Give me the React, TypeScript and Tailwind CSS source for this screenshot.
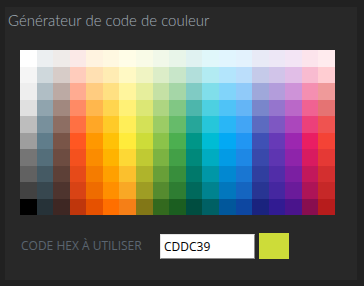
import React from "react";

// material palette, one column per hue, rows 50 -> 900
const columns: string[][] = [
  ["bg-[#ffffff]", "bg-[#f5f5f5]", "bg-[#eeeeee]", "bg-[#e0e0e0]", "bg-[#bdbdbd]", "bg-[#9e9e9e]", "bg-[#757575]", "bg-[#616161]", "bg-[#424242]", "bg-[#000000]"],
  ["bg-[#eceff1]", "bg-[#cfd8dc]", "bg-[#b0bec5]", "bg-[#90a4ae]", "bg-[#78909c]", "bg-[#607d8b]", "bg-[#546e7a]", "bg-[#455a64]", "bg-[#37474f]", "bg-[#263238]"],
  ["bg-[#efebe9]", "bg-[#d7ccc8]", "bg-[#bcaaa4]", "bg-[#a1887f]", "bg-[#8d6e63]", "bg-[#795548]", "bg-[#6d4c41]", "bg-[#5d4037]", "bg-[#4e342e]", "bg-[#3e2723]"],
  ["bg-[#fbe9e7]", "bg-[#ffccbc]", "bg-[#ffab91]", "bg-[#ff8a65]", "bg-[#ff7043]", "bg-[#ff5722]", "bg-[#f4511e]", "bg-[#e64a19]", "bg-[#d84315]", "bg-[#bf360c]"],
  ["bg-[#fff3e0]", "bg-[#ffe0b2]", "bg-[#ffcc80]", "bg-[#ffb74d]", "bg-[#ffa726]", "bg-[#ff9800]", "bg-[#fb8c00]", "bg-[#f57c00]", "bg-[#ef6c00]", "bg-[#e65100]"],
  ["bg-[#fff8e1]", "bg-[#ffecb3]", "bg-[#ffe082]", "bg-[#ffd54f]", "bg-[#ffca28]", "bg-[#ffc107]", "bg-[#ffb300]", "bg-[#ffa000]", "bg-[#ff8f00]", "bg-[#ff6f00]"],
  ["bg-[#fffde7]", "bg-[#fff9c4]", "bg-[#fff59d]", "bg-[#fff176]", "bg-[#ffee58]", "bg-[#ffeb3b]", "bg-[#fdd835]", "bg-[#fbc02d]", "bg-[#f9a825]", "bg-[#f57f17]"],
  ["bg-[#f9fbe7]", "bg-[#f0f4c3]", "bg-[#e6ee9c]", "bg-[#dce775]", "bg-[#d4e157]", "bg-[#cddc39]", "bg-[#c0ca33]", "bg-[#afb42b]", "bg-[#9e9d24]", "bg-[#827717]"],
  ["bg-[#f1f8e9]", "bg-[#dcedc8]", "bg-[#c5e1a5]", "bg-[#aed581]", "bg-[#9ccc65]", "bg-[#8bc34a]", "bg-[#7cb342]", "bg-[#689f38]", "bg-[#558b2f]", "bg-[#33691e]"],
  ["bg-[#e8f5e9]", "bg-[#c8e6c9]", "bg-[#a5d6a7]", "bg-[#81c784]", "bg-[#66bb6a]", "bg-[#4caf50]", "bg-[#43a047]", "bg-[#388e3c]", "bg-[#2e7d32]", "bg-[#1b5e20]"],
  ["bg-[#e0f2f1]", "bg-[#b2dfdb]", "bg-[#80cbc4]", "bg-[#4db6ac]", "bg-[#26a69a]", "bg-[#009688]", "bg-[#00897b]", "bg-[#00796b]", "bg-[#00695c]", "bg-[#004d40]"],
  ["bg-[#e0f7fa]", "bg-[#b2ebf2]", "bg-[#80deea]", "bg-[#4dd0e1]", "bg-[#26c6da]", "bg-[#00bcd4]", "bg-[#00acc1]", "bg-[#0097a7]", "bg-[#00838f]", "bg-[#006064]"],
  ["bg-[#e1f5fe]", "bg-[#b3e5fc]", "bg-[#81d4fa]", "bg-[#4fc3f7]", "bg-[#29b6f6]", "bg-[#03a9f4]", "bg-[#039be5]", "bg-[#0288d1]", "bg-[#0277bd]", "bg-[#01579b]"],
  ["bg-[#e3f2fd]", "bg-[#bbdefb]", "bg-[#90caf9]", "bg-[#64b5f6]", "bg-[#42a5f5]", "bg-[#2196f3]", "bg-[#1e88e5]", "bg-[#1976d2]", "bg-[#1565c0]", "bg-[#0d47a1]"],
  ["bg-[#e8eaf6]", "bg-[#c5cae9]", "bg-[#9fa8da]", "bg-[#7986cb]", "bg-[#5c6bc0]", "bg-[#3f51b5]", "bg-[#3949ab]", "bg-[#303f9f]", "bg-[#283593]", "bg-[#1a237e]"],
  ["bg-[#ede7f6]", "bg-[#d1c4e9]", "bg-[#b39ddb]", "bg-[#9575cd]", "bg-[#7e57c2]", "bg-[#673ab7]", "bg-[#5e35b1]", "bg-[#512da8]", "bg-[#4527a0]", "bg-[#311b92]"],
  ["bg-[#f3e5f5]", "bg-[#e1bee7]", "bg-[#ce93d8]", "bg-[#ba68c8]", "bg-[#ab47bc]", "bg-[#9c27b0]", "bg-[#8e24aa]", "bg-[#7b1fa2]", "bg-[#6a1b9a]", "bg-[#4a148c]"],
  ["bg-[#fce4ec]", "bg-[#f8bbd0]", "bg-[#f48fb1]", "bg-[#f06292]", "bg-[#ec407a]", "bg-[#e91e63]", "bg-[#d81b60]", "bg-[#c2185b]", "bg-[#ad1457]", "bg-[#880e4f]"],
  ["bg-[#ffebee]", "bg-[#ffcdd2]", "bg-[#ef9a9a]", "bg-[#e57373]", "bg-[#ef5350]", "bg-[#f44336]", "bg-[#e53935]", "bg-[#d32f2f]", "bg-[#c62828]", "bg-[#b71c1c]"],
];

const App = () => {
  return (
    <div className="w-[364px] h-[286px] bg-[#212121] pt-[7px] pl-[5px]">
      {/* panel */}
      <div className="w-[352px] h-[273px] bg-[#282828] flex flex-col">
        <h1 className="px-[3px] pt-[3px] h-[28px] text-[15px] leading-[20px] font-light text-[#a3aeb9] font-['Lato',sans-serif]">
          Générateur de code de couleur
        </h1>

        {/* colour grid */}
        <div className="ml-[15px] mt-[15px] w-[315px] h-[165px] flex">
          {columns.map((col, i) => (
            <div key={i} className="flex-1 flex flex-col">
              {col.map((cls, j) => (
                <div key={j} className={`flex-1 ${cls}`} />
              ))}
            </div>
          ))}
        </div>

        {/* hex row */}
        <div className="flex items-center ml-[16px] mt-[18px]">
          <span className="w-[139px] text-[12px] text-[#5b6671] font-['Open_Sans',sans-serif]">
            CODE HEX À UTILISER
          </span>
          <input
            type="text"
            defaultValue="CDDC39"
            className="w-[95px] h-[25px] bg-white border border-t-[#e4e4e4] border-l-[#e4e4e4] border-r-[#8a8a8a] border-b-[#8a8a8a] px-[3px] text-[12px] text-black outline-none font-['Open_Sans',sans-serif]"
          />
          <div className="w-[30px] h-[26px] ml-[4px] bg-[#cddc39]" />
        </div>
      </div>
    </div>
  );
};

export default App;
